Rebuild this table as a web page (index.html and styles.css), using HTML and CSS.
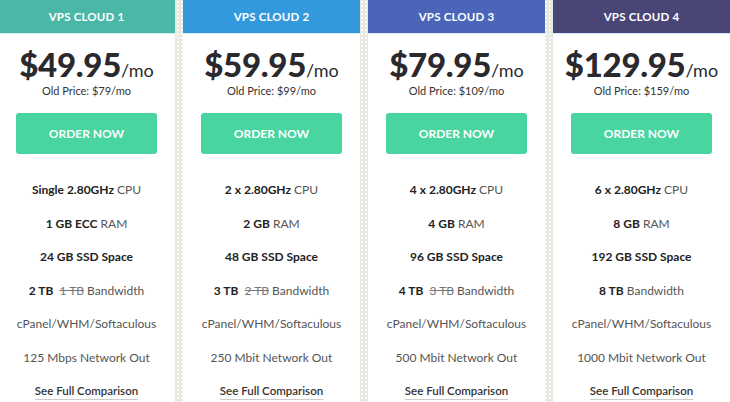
FILE: index.html
```html
<!DOCTYPE html>
<html lang="en">

<head>
    <meta charset="UTF-8">
    <title>VPS Cloud Plans</title>
    <link rel="stylesheet" href="styles.css">
</head>

<body>
    <div class="plans">
        <div class="plan">
            <div class="plan-head c1">VPS CLOUD 1</div>
            <div class="price"><b>$49.95</b><span>/mo</span></div>
            <div class="old">Old Price: $79/mo</div>
            <a class="order" href="#">ORDER NOW</a>
            <ul class="specs">
                <li><b>Single 2.80GHz</b> CPU</li>
                <li><b>1 GB ECC</b> RAM</li>
                <li><b>24 GB SSD Space</b></li>
                <li><b>2 TB</b> <s>1 TB</s> Bandwidth</li>
                <li>cPanel/WHM/Softaculous</li>
                <li>125 Mbps Network Out</li>
                <li><a class="compare" href="#">See Full Comparison</a></li>
            </ul>
        </div>
        <div class="plan">
            <div class="plan-head c2">VPS CLOUD 2</div>
            <div class="price"><b>$59.95</b><span>/mo</span></div>
            <div class="old">Old Price: $99/mo</div>
            <a class="order" href="#">ORDER NOW</a>
            <ul class="specs">
                <li><b>2 x 2.80GHz</b> CPU</li>
                <li><b>2 GB</b> RAM</li>
                <li><b>48 GB SSD Space</b></li>
                <li><b>3 TB</b> <s>2 TB</s> Bandwidth</li>
                <li>cPanel/WHM/Softaculous</li>
                <li>250 Mbit Network Out</li>
                <li><a class="compare" href="#">See Full Comparison</a></li>
            </ul>
        </div>
        <div class="plan">
            <div class="plan-head c3">VPS CLOUD 3</div>
            <div class="price"><b>$79.95</b><span>/mo</span></div>
            <div class="old">Old Price: $109/mo</div>
            <a class="order" href="#">ORDER NOW</a>
            <ul class="specs">
                <li><b>4 x 2.80GHz</b> CPU</li>
                <li><b>4 GB</b> RAM</li>
                <li><b>96 GB SSD Space</b></li>
                <li><b>4 TB</b> <s>3 TB</s> Bandwidth</li>
                <li>cPanel/WHM/Softaculous</li>
                <li>500 Mbit Network Out</li>
                <li><a class="compare" href="#">See Full Comparison</a></li>
            </ul>
        </div>
        <div class="plan">
            <div class="plan-head c4">VPS CLOUD 4</div>
            <div class="price"><b>$129.95</b><span>/mo</span></div>
            <div class="old">Old Price: $159/mo</div>
            <a class="order" href="#">ORDER NOW</a>
            <ul class="specs">
                <li><b>6 x 2.80GHz</b> CPU</li>
                <li><b>8 GB</b> RAM</li>
                <li><b>192 GB SSD Space</b></li>
                <li><b>8 TB</b> Bandwidth</li>
                <li>cPanel/WHM/Softaculous</li>
                <li>1000 Mbit Network Out</li>
                <li><a class="compare" href="#">See Full Comparison</a></li>
            </ul>
        </div>
    </div>
</body>

</html>
```

FILE: styles.css
```css
* {
    margin: 0;
    padding: 0;
    box-sizing: border-box;
}

html,
body {
    width: 100%;
    height: 100%;
    overflow: hidden;
}

body {
    font-family: Lato, "Open Sans", sans-serif;
    color: #555;
    background-color: #e9e9e4;
    background-image: radial-gradient(#fafaf8 0.8px, transparent 1.2px);
    background-size: 4px 4px;
}

.plans {
    display: grid;
    grid-template-columns: repeat(4, 177px);
    column-gap: 8px;
    width: 732px;
    margin-left: -2px;
    height: 100%;
}

.plan {
    background: #fff;
    text-align: center;
    display: flex;
    flex-direction: column;
    align-items: center;
}

.plan-head {
    width: 100%;
    height: 34px;
    line-height: 33px;
    color: #fff;
    font-size: 11.5px;
    font-weight: 700;
    letter-spacing: 0.2px;
    border-bottom: 1px solid #d3ecf8;
}

.c1 { background: #4bb8a7; }
.c2 { background: #3399dd; }
.c3 { background: #4b66b9; }
.c4 { background: #4a4577; }

.price {
    margin-top: 11px;
    height: 38px;
    font-size: 33px;
    line-height: 38px;
    color: #2a2a2e;
    white-space: nowrap;
}

.price b {
    font-weight: 900;
    letter-spacing: -0.3px;
    line-height: 1;
}

.price span {
    font-size: 18px;
    line-height: 1;
}

.old {
    height: 12px;
    margin-top: 2px;
    font-size: 11px;
    color: #333;
    line-height: 12px;
}

.order {
    display: block;
    width: 141px;
    height: 41px;
    line-height: 41px;
    margin-top: 16px;
    border-radius: 3px;
    background: #48d5a0;
    color: #fff;
    font-size: 12px;
    font-weight: 700;
    text-decoration: none;
}

.specs {
    list-style: none;
    margin-top: 19px;
    font-size: 12px;
}

.specs li {
    height: 33.5px;
    line-height: 33.5px;
    white-space: nowrap;
}

.specs b {
    color: #222;
    font-weight: 700;
}

.specs s {
    color: #777;
    margin-left: 3px;
}

.compare {
    color: #333;
    font-size: 11.5px;
    font-weight: 600;
    text-decoration: none;
    border-bottom: 1px solid #ccc;
    padding-bottom: 2px;
}
```
